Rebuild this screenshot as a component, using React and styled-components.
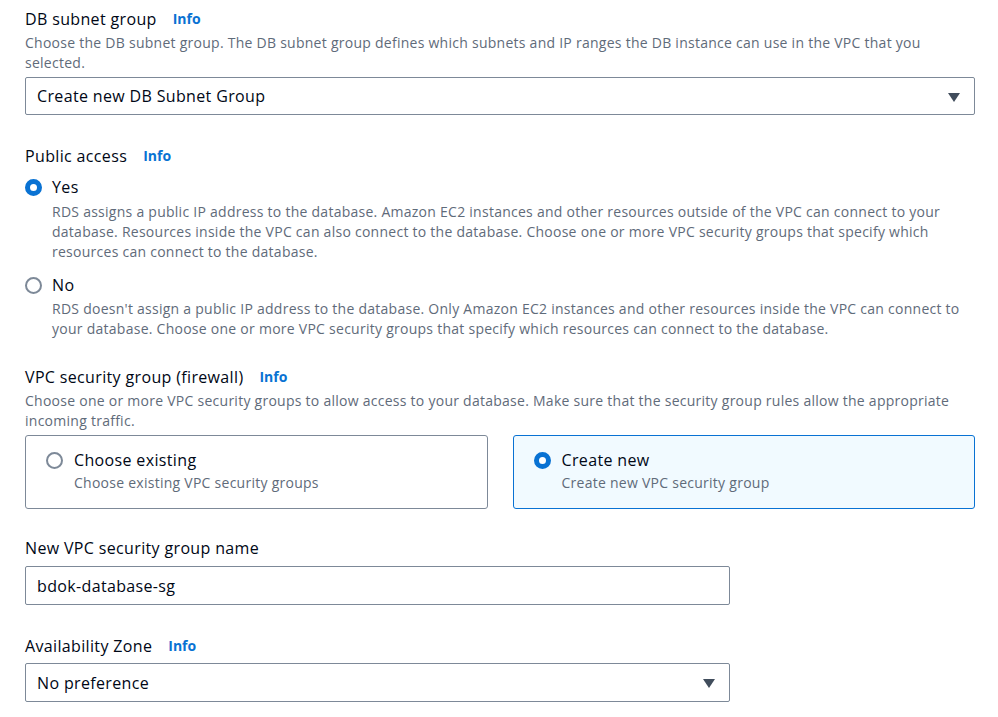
import React from 'react';
import styled, { createGlobalStyle } from 'styled-components';

const GlobalStyle = createGlobalStyle`
  body {
    margin: 0;
    background: #ffffff;
    font-family: 'Open Sans', 'Noto Sans', sans-serif;
    color: #000716;
  }
`;

const Page = styled.div`
  width: 950px;
  padding: 8px 23px 0 25px;
  display: flex;
  flex-direction: column;
  gap: 28px;
`;

const Field = styled.div`
  display: flex;
  flex-direction: column;
  width: ${(p) => p.width || '100%'};
  margin-top: ${(p) => p.shift || '0'};
`;

const LabelRow = styled.div`
  display: flex;
  align-items: center;
  gap: 16px;
  font-size: 16px;
  line-height: 22px;
  letter-spacing: 0.35px;
  color: #000716;
`;

const InfoLink = styled.a`
  font-size: 14px;
  font-weight: 700;
  letter-spacing: 0;
  color: #0972d3;
  text-decoration: none;
`;

const Description = styled.div`
  font-size: 14px;
  line-height: 20px;
  letter-spacing: 0.26px;
  color: #5f6b7a;
  margin-top: ${(p) => p.top || '3px'};
`;

const Control = styled.div`
  margin-top: ${(p) => p.top || '5px'};
  height: ${(p) => p.h || '38px'};
  box-sizing: border-box;
  border: 1px solid #7d8998;
  border-radius: 2px;
  display: flex;
  align-items: center;
  justify-content: space-between;
  padding: 0 14px 0 11px;
  font-size: 16px;
  letter-spacing: 0.35px;
  color: #000716;
`;

const Caret = styled.span`
  width: 0;
  height: 0;
  margin-top: 2px;
  border-left: 6px solid transparent;
  border-right: 6px solid transparent;
  border-top: 9px solid #414d5c;
`;

const RadioGroup = styled.div`
  display: flex;
  flex-direction: column;
  gap: 12px;
  margin-top: 9px;
`;

const RadioItem = styled.div`
  display: flex;
  flex-direction: column;
`;

const RadioLine = styled.div`
  display: flex;
  align-items: center;
  gap: ${(p) => p.gap || '10px'};
  font-size: 16px;
  line-height: 22px;
  letter-spacing: 0.35px;
`;

const RadioCircle = styled.span`
  width: 17px;
  height: 17px;
  box-sizing: border-box;
  border-radius: 50%;
  flex-shrink: 0;
  background: #fff;
  border: ${(p) => (p.checked ? '5px solid #0972d3' : '2px solid #7d8998')};
`;

const RadioDesc = styled.div`
  font-size: 14px;
  line-height: 20px;
  letter-spacing: 0.26px;
  color: #5f6b7a;
  padding-left: ${(p) => p.indent || '27px'};
  margin-top: ${(p) => p.top || '4px'};
`;

const Tiles = styled.div`
  display: grid;
  grid-template-columns: 1fr 1fr;
  gap: 25px;
  margin-top: 4px;
`;

const Tile = styled.div`
  height: 74px;
  box-sizing: border-box;
  border: 1px solid ${(p) => (p.selected ? '#0972d3' : '#7d8998')};
  background: ${(p) => (p.selected ? '#f1faff' : '#ffffff')};
  border-radius: 3px;
  padding: 13px 20px 0 20px;
`;

function Select({ value, top, h }) {
  return (
    <Control top={top} h={h}>
      <span>{value}</span>
      <Caret />
    </Control>
  );
}

export default function App() {
  return (
    <>
      <GlobalStyle />
      <Page>
        <Field>
          <LabelRow>
            DB subnet group <InfoLink href="#">Info</InfoLink>
          </LabelRow>
          <Description>
            Choose the DB subnet group. The DB subnet group defines which subnets and IP ranges the DB
            instance can use in the VPC that you selected.
          </Description>
          <Select value="Create new DB Subnet Group" top="4px" />
        </Field>

        <Field shift="2px">
          <LabelRow>
            Public access <InfoLink href="#">Info</InfoLink>
          </LabelRow>
          <RadioGroup>
            <RadioItem>
              <RadioLine>
                <RadioCircle checked />
                Yes
              </RadioLine>
              <RadioDesc>
                RDS assigns a public IP address to the database. Amazon EC2 instances and other resources
                outside of the VPC can connect to your database. Resources inside the VPC can also connect
                to the database. Choose one or more VPC security groups that specify which resources can
                connect to the database.
              </RadioDesc>
            </RadioItem>
            <RadioItem>
              <RadioLine>
                <RadioCircle />
                No
              </RadioLine>
              <RadioDesc top="3px">
                RDS doesn't assign a public IP address to the database. Only Amazon EC2 instances and other
                resources inside the VPC can connect to your database. Choose one or more VPC security groups
                that specify which resources can connect to the database.
              </RadioDesc>
            </RadioItem>
          </RadioGroup>
        </Field>

        <Field shift="-1px">
          <LabelRow>
            VPC security group (firewall) <InfoLink href="#">Info</InfoLink>
          </LabelRow>
          <Description>
            Choose one or more VPC security groups to allow access to your database. Make sure that the
            security group rules allow the appropriate incoming traffic.
          </Description>
          <Tiles>
            <Tile>
              <RadioLine gap="11px">
                <RadioCircle />
                Choose existing
              </RadioLine>
              <RadioDesc indent="28px" top="2px">
                Choose existing VPC security groups
              </RadioDesc>
            </Tile>
            <Tile selected>
              <RadioLine gap="11px">
                <RadioCircle checked />
                Create new
              </RadioLine>
              <RadioDesc indent="28px" top="2px">
                Create new VPC security group
              </RadioDesc>
            </Tile>
          </Tiles>
        </Field>

        <Field width="705px">
          <LabelRow>New VPC security group name</LabelRow>
          <Control top="7px" h="39px">bdok-database-sg</Control>
        </Field>

        <Field width="705px" shift="2px">
          <LabelRow>
            Availability Zone <InfoLink href="#">Info</InfoLink>
          </LabelRow>
          <Select value="No preference" top="6px" h="39px" />
        </Field>
      </Page>
    </>
  );
}
